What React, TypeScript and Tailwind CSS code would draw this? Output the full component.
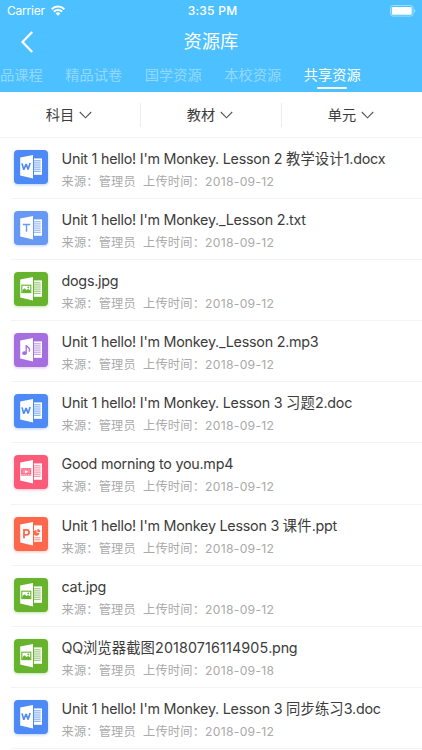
import { useState } from "react";

type FileKind = 'word' | 'text' | 'image' | 'audio' | 'video' | 'ppt';

interface ResourceFile {
  name: string;
  kind: FileKind;
  date: string;
}

const tabs = ['品课程', '精品试卷', '国学资源', '本校资源', '共享资源'];
const filters = ['科目', '教材', '单元'];

const files: ResourceFile[] = [
  { name: "Unit 1 hello! I'm Monkey. Lesson 2 教学设计1.docx", kind: 'word', date: '2018-09-12' },
  { name: "Unit 1 hello! I'm Monkey._Lesson 2.txt", kind: 'text', date: '2018-09-12' },
  { name: 'dogs.jpg', kind: 'image', date: '2018-09-12' },
  { name: "Unit 1 hello! I'm Monkey._Lesson 2.mp3", kind: 'audio', date: '2018-09-12' },
  { name: "Unit 1 hello! I'm Monkey. Lesson 3 习题2.doc", kind: 'word', date: '2018-09-12' },
  { name: 'Good morning to you.mp4', kind: 'video', date: '2018-09-12' },
  { name: "Unit 1 hello! I'm Monkey Lesson 3 课件.ppt", kind: 'ppt', date: '2018-09-12' },
  { name: 'cat.jpg', kind: 'image', date: '2018-09-12' },
  { name: 'QQ浏览器截图20180716114905.png', kind: 'image', date: '2018-09-18' },
  { name: "Unit 1 hello! I'm Monkey. Lesson 3 同步练习3.doc", kind: 'word', date: '2018-09-12' },
];

const iconStyles: Record<FileKind, string> = {
  word: 'bg-[#4d8af5] text-[#4d8af5] shadow-[0_1px_3px_#4d8af566]',
  text: 'bg-[#6798f3] text-[#6798f3] shadow-[0_1px_3px_#6798f366]',
  image: 'bg-[#67b32e] text-[#67b32e] shadow-[0_1px_3px_#67b32e66]',
  audio: 'bg-[#a56fe0] text-[#a56fe0] shadow-[0_1px_3px_#a56fe066]',
  video: 'bg-[#fb5b78] text-[#fb5b78] shadow-[0_1px_3px_#fb5b7866]',
  ppt: 'bg-[#fd674b] text-[#fd674b] shadow-[0_1px_3px_#fd674b66]',
};

function KindMark({ kind }: { kind: FileKind }) {
  switch (kind) {
    case 'word':
      return <path d="M8 13.4l1.8 6.4 2.3-5.8 2 5.6 2-6.6" fill="none" stroke="currentColor" strokeWidth="1.6" strokeLinejoin="bevel" />;
    case 'text':
      return <path d="M8.8 13.5h7.4M12.5 13.5v7.3" fill="none" stroke="currentColor" strokeWidth="1.4" />;
    case 'image':
      return (
        <>
          <rect x="7.8" y="13.2" width="9" height="7.4" fill="none" stroke="currentColor" strokeWidth="1.1" />
          <path d="M8.4 20v-1.7l2-2 2 1.7 1.8-1 2.2 1.4V20z" fill="currentColor" />
          <circle cx="14.3" cy="15.4" r="0.9" fill="currentColor" />
        </>
      );
    case 'audio':
      return (
        <>
          <path d="M12.2 20.3v-8.2c.6 2.1 3.4 2.2 3.4 4.6 0 .8-.3 1.5-.7 2" fill="none" stroke="currentColor" strokeWidth="1.3" />
          <ellipse cx="10.5" cy="20.2" rx="2.3" ry="1.9" fill="currentColor" />
        </>
      );
    case 'video':
      return (
        <>
          <rect x="7.2" y="13" width="10" height="7.6" fill="currentColor" />
          <path d="M7.6 14h9.2M7.6 19.6h9.2" stroke="white" strokeWidth="0.8" strokeDasharray="1.1 0.9" />
          <rect x="8.3" y="15.2" width="8" height="3.2" fill="white" opacity="0.35" />
          <path d="M11.2 15.2l2.8 1.6-2.8 1.6z" fill="white" />
        </>
      );
    case 'ppt':
      return <path d="M10 21.3v-8.4h2.4c3.6 0 3.6 4.9 0 4.9H10" fill="none" stroke="currentColor" strokeWidth="1.8" />;
  }
}

function FileIcon({ kind }: { kind: FileKind }) {
  return (
    <div className={`h-[34px] w-[34px] shrink-0 rounded-[4px] ${iconStyles[kind]}`}>
      <svg viewBox="0 0 34 34" className="h-full w-full">
        <path d="M20 8.4h8v16.4h-8z" fill="white" />
        {kind === 'ppt' ? (
          <>
            <path d="M22.5 12.9v2.9h2.9a2.9 2.9 0 1 1-2.9-2.9z" fill="currentColor" />
            <path d="M23.4 12c1.6 0 2.9 1.3 2.9 2.9h-2.9z" fill="currentColor" />
            <path d="M20.2 20.8h6.2M20.2 22.8h6.2" stroke="currentColor" strokeWidth="0.8" />
          </>
        ) : (
          <path
            d="M20 10.8h6.7M20 12.9h6.7M20 15h6.7M20 17.1h6.7M20 19.2h6.7M20 21.3h6.7"
            stroke="currentColor"
            strokeWidth="0.8"
          />
        )}
        <path d="M6.2 7.6L19 4.9v23.6L6.2 25.6z" fill="white" />
        <KindMark kind={kind} />
      </svg>
    </div>
  );
}

// Latin text is set slightly tighter than the Chinese runs around it
function FileName({ name }: { name: string }) {
  const parts = name.split(/([\u4e00-\u9fff]+|\d{6,})/);
  return (
    <p className="whitespace-pre text-[14.3px] leading-[22px] tracking-[-0.23px]">
      {parts.map((part, index) => (
        index % 2 === 1 ? <span key={index} className="tracking-[0.13px]">{part}</span> : part
      ))}
    </p>
  );
}

function StatusBar() {
  return (
    <div className="grid h-[21px] grid-cols-3 items-center pl-[7px] pr-[6px] text-[12px] leading-none">
      <div className="flex items-center gap-[6px]">
        <span className="tracking-[-0.2px]">Carrier</span>
        <svg viewBox="0 0 14 11" className="h-[11px] w-[14px]" fill="none" stroke="white" strokeWidth="2">
          <path d="M0.7 4.2a8.9 8.9 0 0 1 12.6 0M2.9 6.6a5.8 5.8 0 0 1 8.2 0" />
          <path d="M7 10.7L4.7 8.4a3.2 3.2 0 0 1 4.6 0z" fill="white" stroke="none" />
        </svg>
      </div>
      <div className="pl-[2px] text-center font-medium tracking-[0.25px]">3:35 PM</div>
      <div className="flex justify-end">
        <svg viewBox="0 0 26 12" className="h-[12px] w-[26px]">
          <rect x="0.5" y="0.5" width="22.5" height="10.6" rx="2.5" fill="none" stroke="white" strokeOpacity="0.45" />
          <rect x="1.8" y="1.9" width="19.9" height="7.9" rx="1.2" fill="white" />
          <path d="M24.2 4v3.8c1.6-.6 1.6-3.2 0-3.8z" fill="white" fillOpacity="0.5" />
        </svg>
      </div>
    </div>
  );
}

export default function App() {
  const [activeTab, setActiveTab] = useState('共享资源');

  return (
    <div className="flex h-[750px] w-[422px] flex-col overflow-hidden bg-white font-['Inter','Noto_Sans_CJK_SC',sans-serif] text-[#3c3c3c]">
      <header className="h-[92px] shrink-0 bg-[#4dc1ff] text-white">
        <StatusBar />
        <div className="grid h-[41px] grid-cols-3 items-center">
          <button className="pl-[21px]" aria-label="返回">
            <svg viewBox="0 0 12 22" className="h-[22px] w-[12px]" fill="none" stroke="white" strokeWidth="2.2">
              <path d="M11.2 1L1.5 11l9.7 10" />
            </svg>
          </button>
          <h1 className="text-center text-[18.3px] leading-none">资源库</h1>
        </div>
        <nav className="flex h-[30px] justify-end pr-[50px]">
          {tabs.map((tab, index) => (
            <button
              key={tab}
              onClick={() => setActiveTab(tab)}
              className={`flex shrink-0 flex-col whitespace-nowrap text-[14.2px] leading-[26px] ${index === 0 ? 'w-[54px] items-start' : 'w-[79.5px] items-center'} ${tab === activeTab ? 'text-white' : 'text-white/40'}`}
            >
              <span>{tab}</span>
              {tab === activeTab && <span className="-mt-[1px] h-[2px] w-[30px] rounded-full bg-white" />}
            </button>
          ))}
        </nav>
      </header>

      <div className="flex h-[46px] shrink-0 items-center divide-x divide-[#ececec] border-b border-[#f3f3f3]">
        {filters.map(filter => (
          <button key={filter} className="flex h-6 flex-1 items-center justify-center gap-[5px] pr-[2px] text-[14.2px]">
            <span>{filter}</span>
            <svg viewBox="0 0 13 8" className="h-[8px] w-[13px]" fill="none" stroke="#555555" strokeWidth="1.1">
              <path d="M0.8 1l5.7 5.8L12.2 1" />
            </svg>
          </button>
        ))}
      </div>

      <ul>
        {files.map(file => (
          <li key={file.name} className="ml-[11px] flex h-[61.1px] border-b border-[#f3f3f3] pl-[3px]">
            <div className="pt-[12px]">
              <FileIcon kind={file.kind} />
            </div>
            <div className="ml-[13.5px] flex-1 whitespace-nowrap pt-[10px]">
              <FileName name={file.name} />
              <p className="mt-[2px] text-[12.2px] leading-[19px] tracking-[0.2px] text-[#aaaaaa]">
                来源：管理员&nbsp; 上传时间：<span className="tracking-[0.28px]">{file.date}</span>
              </p>
            </div>
          </li>
        ))}
      </ul>
    </div>
  );
}
